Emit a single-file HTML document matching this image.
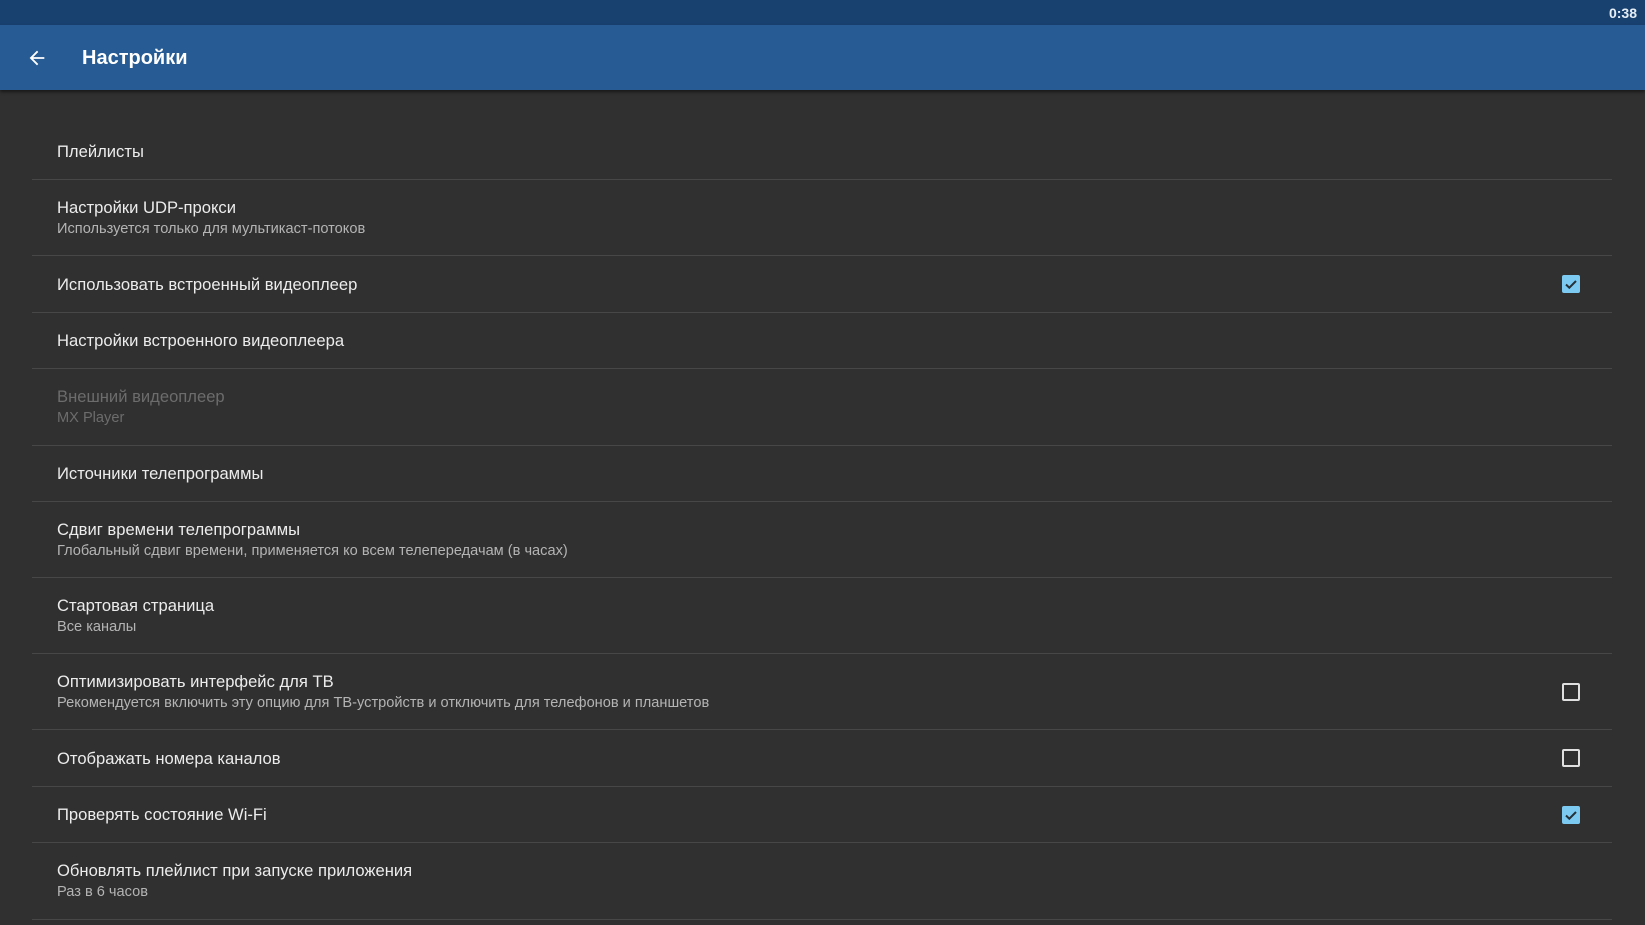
<!DOCTYPE html>
<html><head><meta charset="utf-8"><style>
*{margin:0;padding:0;box-sizing:border-box}
body{width:1645px;height:925px;background:#303030;font-family:"Liberation Sans","Noto Sans CJK SC",sans-serif;overflow:hidden;position:relative}
.sb{position:absolute;left:0;top:0;width:1645px;height:25px;background:#184170}
.sb span{position:absolute;right:8px;top:5px;color:#e6eef6;font-size:14px;font-weight:bold}
.tb{position:absolute;left:0;top:25px;width:1645px;height:65px;background:#265b93;box-shadow:0 2px 3px rgba(0,0,0,.5)}
.tb .t{position:absolute;left:82px;top:22px;color:#fff;font-size:20px;font-weight:bold}
.tb svg{position:absolute;left:26px;top:22px}
.row{position:absolute;left:32px;width:1580px;border-bottom:1px solid #474747;display:flex;flex-direction:column;justify-content:center;padding-left:25px}
.ti{color:#ececec;font-size:16.6px;line-height:21px}
.su{color:#b4b4b4;font-size:14.6px;line-height:19px;margin-top:2px}
.dis .ti,.dis .su{color:#6c6c6c}
.cb{position:absolute;right:32px;top:50%;margin-top:-9px;width:18px;height:18px;border-radius:2px}
.cb.on{background:#7ccaf2}
.cb.off{border:2px solid #e0e0e0}
</style></head><body>
<div class="sb"><span>0:38</span></div>
<div class="tb"><svg width="22" height="22" viewBox="0 0 24 24"><path d="M20 11H7.8l5.6-5.6L12 4l-8 8 8 8 1.4-1.4L7.8 13H20z" fill="#fff"/></svg><div class="t">Настройки</div></div>

<div class="row" style="top:124px;height:56px"><div class="ti">Плейлисты</div></div>
<div class="row" style="top:180px;height:76px"><div class="ti">Настройки UDP-прокси</div><div class="su">Используется только для мультикаст-потоков</div></div>
<div class="row" style="top:256px;height:57px"><div class="ti">Использовать встроенный видеоплеер</div><div class="cb on"><svg width="18" height="18" viewBox="0 0 18 18"><path d="M4 9.5l3.3 3.2L14 6" stroke="#263238" stroke-width="2" fill="none"/></svg></div></div>
<div class="row" style="top:313px;height:56px"><div class="ti">Настройки встроенного видеоплеера</div></div>
<div class="row dis" style="top:369px;height:77px"><div class="ti">Внешний видеоплеер</div><div class="su">MX Player</div></div>
<div class="row" style="top:446px;height:56px"><div class="ti">Источники телепрограммы</div></div>
<div class="row" style="top:502px;height:76px"><div class="ti">Сдвиг времени телепрограммы</div><div class="su">Глобальный сдвиг времени, применяется ко всем телепередачам (в часах)</div></div>
<div class="row" style="top:578px;height:76px"><div class="ti">Стартовая страница</div><div class="su">Все каналы</div></div>
<div class="row" style="top:654px;height:76px"><div class="ti">Оптимизировать интерфейс для ТВ</div><div class="su">Рекомендуется включить эту опцию для ТВ-устройств и отключить для телефонов и планшетов</div><div class="cb off"></div></div>
<div class="row" style="top:730px;height:57px"><div class="ti">Отображать номера каналов</div><div class="cb off"></div></div>
<div class="row" style="top:787px;height:56px"><div class="ti">Проверять состояние Wi-Fi</div><div class="cb on"><svg width="18" height="18" viewBox="0 0 18 18"><path d="M4 9.5l3.3 3.2L14 6" stroke="#263238" stroke-width="2" fill="none"/></svg></div></div>
<div class="row" style="top:843px;height:77px"><div class="ti">Обновлять плейлист при запуске приложения</div><div class="su">Раз в 6 часов</div></div>
</body></html>
